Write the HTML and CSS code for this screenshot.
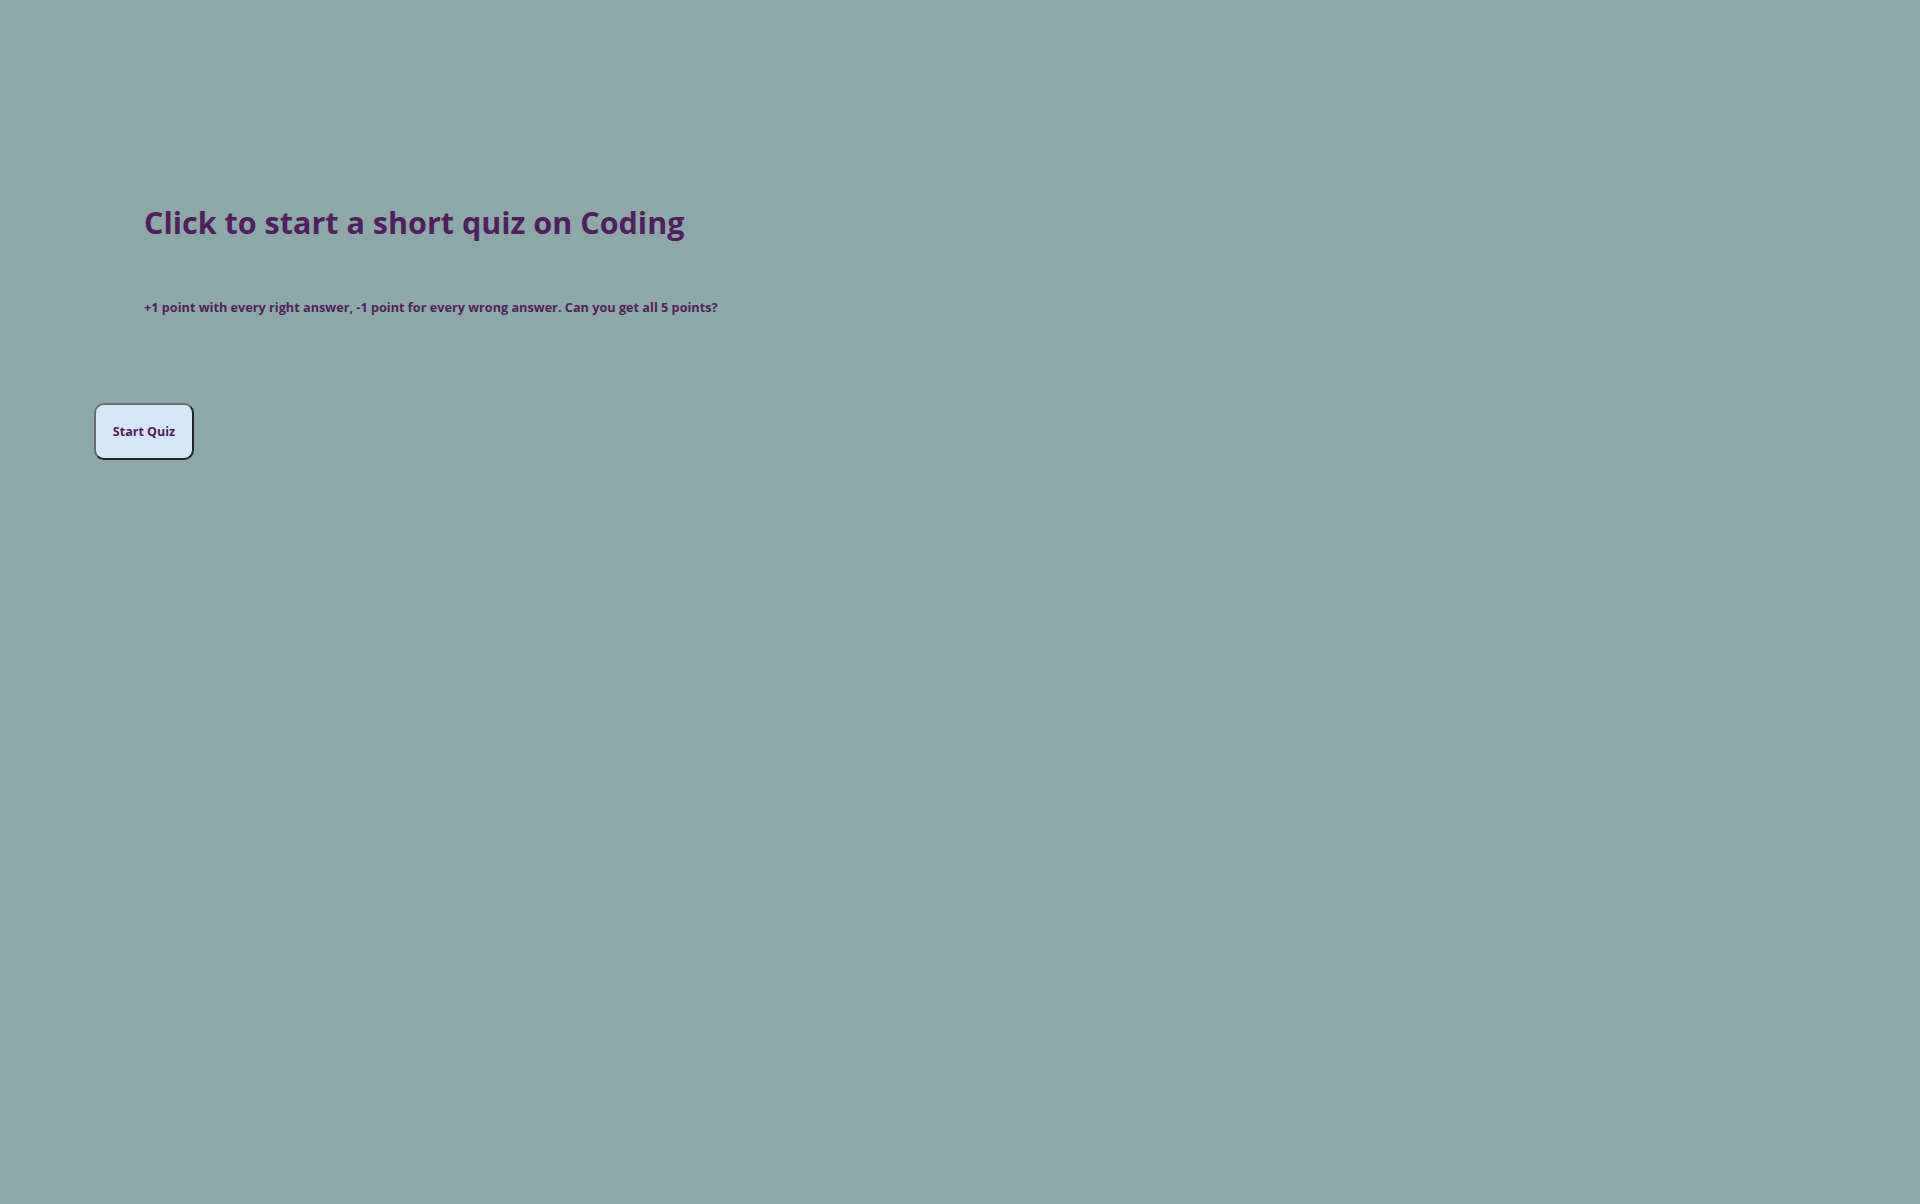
FILE: index.html
```html
<!DOCTYPE html>
<html>
<head>
<meta charset="utf-8">
<title>Coding Quiz</title>
<link rel="stylesheet" href="styles.css">
</head>
<body>
<main class="page">
  <section class="intro">
    <h1 class="title">Click to start a short quiz on Coding</h1>
    <p class="rules">+1 point with every right answer, -1 point for every wrong answer. Can you get all 5 points?</p>
  </section>
  <button class="start">Start Quiz</button>
</main>
</body>
</html>
```
FILE: styles.css
```css
html, body {
  margin: 0;
  padding: 0;
  height: 100%;
}
body {
  background: #8ca8a8;
  color: #511f5e;
  font-family: "Open Sans", "Noto Sans", sans-serif;
}
.page {
  padding: 202px 0 0 94px;
  display: flex;
  flex-direction: column;
  align-items: flex-start;
}
.intro {
  padding-left: 50px;
}
.title {
  margin: 0;
  font-size: 30.5px;
  font-weight: 700;
  line-height: 40px;
}
.rules {
  margin: 57px 0 0;
  font-size: 12.7px;
  font-weight: 700;
  line-height: 16px;
}
.start {
  margin-top: 88px;
  width: 100px;
  height: 57px;
  background: #d8e7f7;
  color: #4a1d5a;
  border: 2px solid;
  border-color: #6e6e6e #222 #222 #6e6e6e;
  border-radius: 10px;
  font-family: "Open Sans", "Noto Sans", sans-serif;
  font-weight: 700;
  font-size: 12.5px;
  padding: 0;
}
```
